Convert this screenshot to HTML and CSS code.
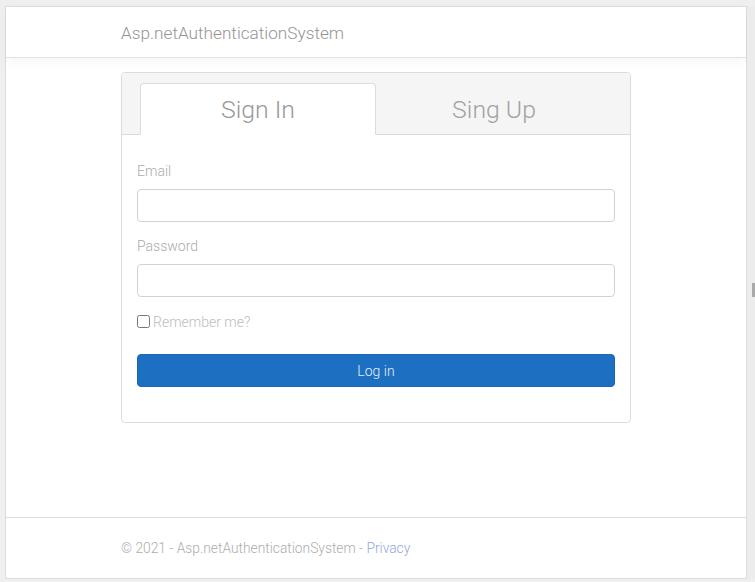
FILE: index.html
```html
<!DOCTYPE html>
<html lang="en">
<head>
<meta charset="utf-8">
<title>Log in - Asp.netAuthenticationSystem</title>
<link rel="stylesheet" href="styles.css">
</head>
<body>
<div class="window">
  <header class="navbar">
    <div class="container">
      <a class="brand" href="#">Asp.netAuthenticationSystem</a>
    </div>
  </header>
  <main class="main">
    <div class="container">
      <div class="card">
        <div class="card-header">
          <div class="tab active">Sign In</div>
          <div class="tab">Sing Up</div>
        </div>
        <form class="card-body">
          <div class="form-group">
            <label class="label" for="email">Email</label>
            <input class="input" id="email" type="email">
          </div>
          <div class="form-group">
            <label class="label" for="password">Password</label>
            <input class="input" id="password" type="password">
          </div>
          <div class="check">
            <input type="checkbox" id="remember" class="checkbox">
            <label for="remember" class="check-label">Remember me?</label>
          </div>
          <button type="button" class="btn">Log in</button>
        </form>
      </div>
    </div>
  </main>
  <footer class="footer">
    <div class="container">&copy; 2021 - Asp.netAuthenticationSystem - <a href="#" class="link">Privacy</a></div>
  </footer>
</div>
<div class="scrollbar"><div class="thumb"></div></div>
</body>
</html>
```

FILE: styles.css
```css
* { box-sizing: border-box; }

html, body { height: 100%; }

body {
  margin: 0;
  padding: 6px 0 3px 5px;
  background: #efefef;
  display: flex;
  font-family: Roboto, "Liberation Sans", sans-serif;
  font-weight: 300;
  font-size: 14px;
  color: #999;
}

.window {
  width: 742px;
  background: #fff;
  border: 1px solid #dcdcdc;
  display: flex;
  flex-direction: column;
}

.scrollbar {
  flex: 1;
  position: relative;
  background: #ececec;
}

.thumb {
  position: absolute;
  right: 0;
  top: 277px;
  width: 3px;
  height: 14px;
  background: #a9a9a9;
}

.container {
  width: 510px;
  margin: 0 auto;
}

.navbar {
  height: 51px;
  border-bottom: 1px solid #e2e2e2;
  box-shadow: 0 4px 12px rgba(0, 0, 0, 0.04);
  display: flex;
  align-items: center;
}

.brand {
  font-size: 17.2px;
  color: #949494;
  text-decoration: none;
  position: relative;
  top: 1px;
}

.main {
  flex: 1;
  padding-top: 14px;
}

.card {
  border: 1px solid #dcdcdc;
  border-radius: 4px;
  overflow: hidden;
}

.card-header {
  background: #f5f5f5;
  border-bottom: 1px solid #dcdcdc;
  padding: 10px 18px 0;
  display: flex;
  margin-bottom: -1px;
}

.tab {
  flex: 1;
  height: 52px;
  display: flex;
  align-items: center;
  justify-content: center;
  font-size: 24.8px;
  color: #a2a2a2;
  border: 1px solid transparent;
  border-radius: 4px 4px 0 0;
  margin-bottom: -1px;
}

.tab.active {
  background: #fff;
  border-color: #dcdcdc;
  border-bottom-color: #fff;
  color: #999;
}

.card-body {
  padding: 26px 15px 35px;
  border-top: 1px solid #dcdcdc;
}

.form-group {
  margin-bottom: 14px;
}

.label {
  display: block;
  line-height: 21px;
  margin-bottom: 7px;
  color: #ababab;
}

.input {
  display: block;
  width: 100%;
  height: 33px;
  border: 1px solid #cfd2d6;
  border-radius: 4px;
  background: #fff;
  font: inherit;
}

.check {
  display: flex;
  align-items: center;
  height: 21px;
  margin-top: 14px;
}

.checkbox {
  width: 13px;
  height: 13px;
  margin: 0 3px 0 0;
}

.check-label {
  color: #bdbdbd;
  font-size: 14px;
}

.btn {
  display: block;
  width: 100%;
  height: 33px;
  margin-top: 22px;
  border: 1px solid #1a67b8;
  border-radius: 4px;
  background: #1d6fc2;
  color: #e6eef8;
  font: inherit;
  font-size: 14px;
}

.footer {
  height: 61px;
  border-top: 1px solid #dcdcdc;
  line-height: 60px;
  color: #adadad;
  font-size: 13.8px;
}

.link {
  color: #94a7d8;
  text-decoration: none;
}
```
